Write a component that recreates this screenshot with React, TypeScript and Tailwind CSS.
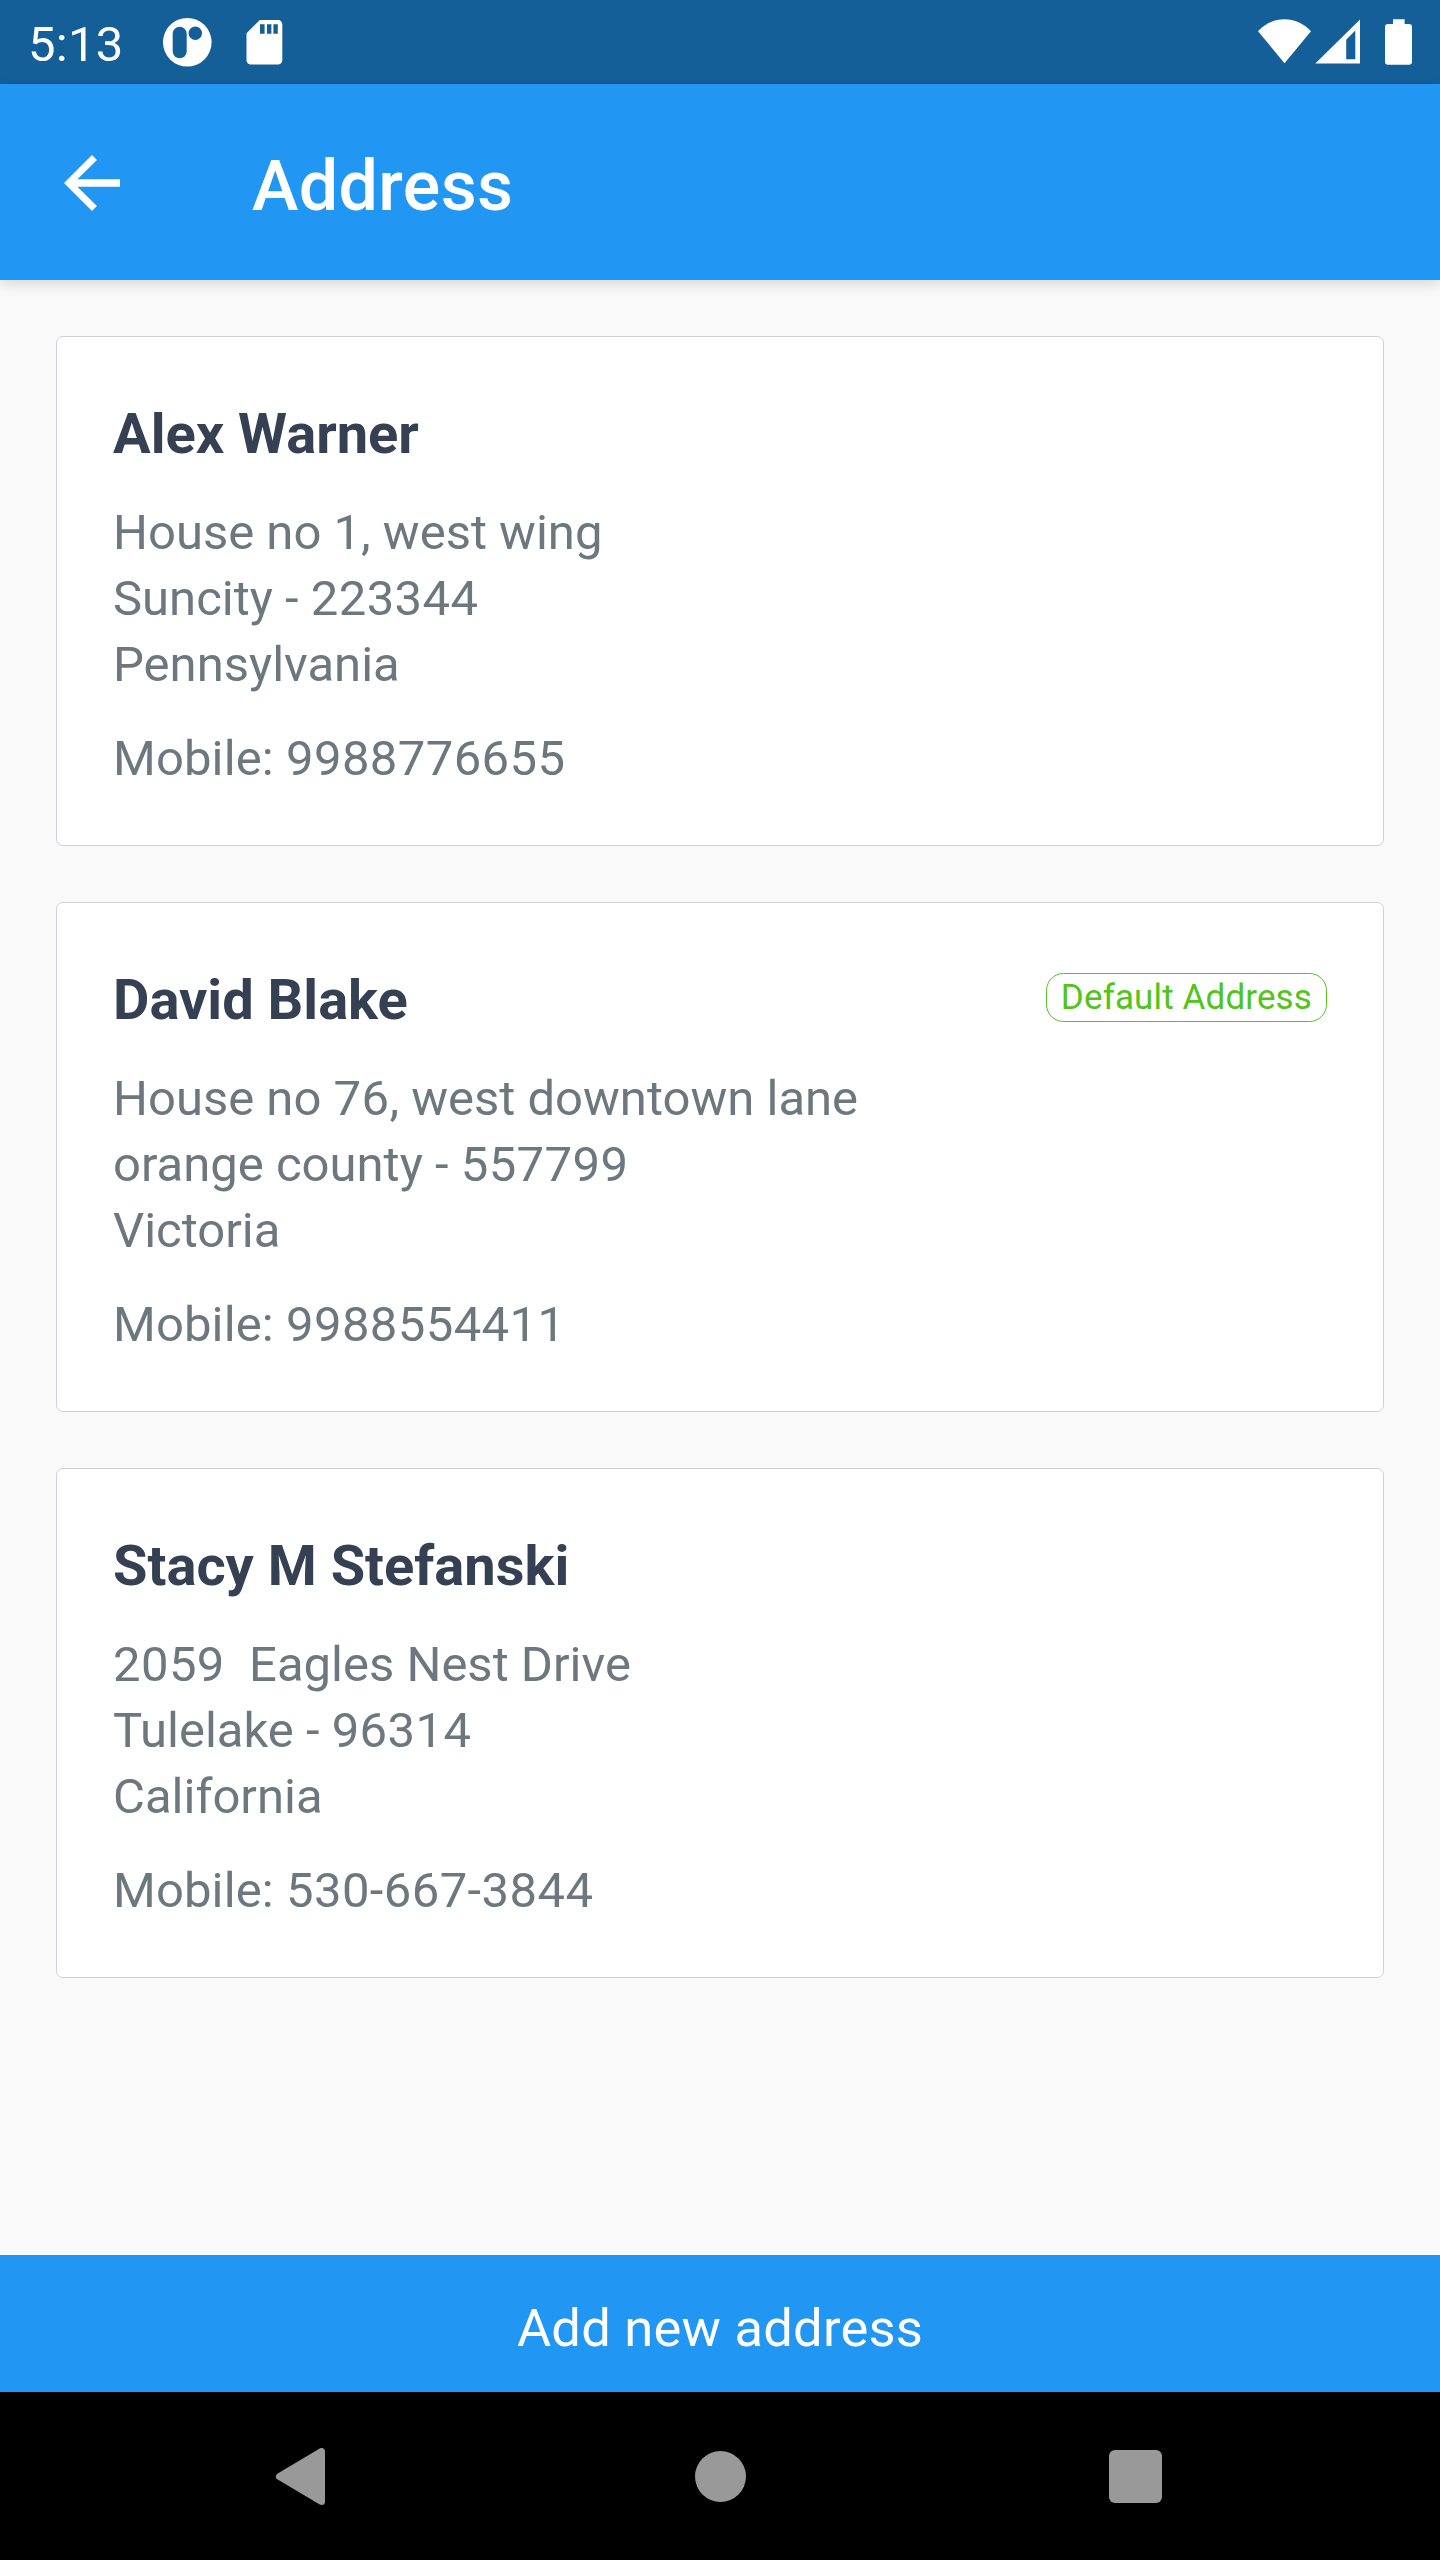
type Address = {
  name: string;
  lines: string[];
  mobile: string;
  isDefault?: boolean;
};

const addresses: Address[] = [
  {
    name: "Alex Warner",
    lines: ["House no 1, west wing", "Suncity - 223344", "Pennsylvania"],
    mobile: "9988776655",
  },
  {
    name: "David Blake",
    lines: ["House no 76, west downtown lane", "orange county - 557799", "Victoria"],
    mobile: "9988554411",
    isDefault: true,
  },
  {
    name: "Stacy M Stefanski",
    lines: ["2059  Eagles Nest Drive", "Tulelake - 96314", "California"],
    mobile: "530-667-3844",
  },
];

function StatusBar() {
  return (
    <div className="flex h-[84px] shrink-0 items-center justify-between bg-[#155f99] pl-7 pr-[27px] text-white">
      <div className="flex h-full items-center">
        <span className="mt-[5px] w-[134px] text-[49px] leading-[58px] tracking-[0.3px]">5:13</span>
        <svg className="h-[84px] w-[50px]" viewBox="162 0 50 84" aria-hidden="true">
          <circle cx="187.3" cy="42.3" r="24.3" fill="#fff" />
          <rect x="172.7" y="26.8" width="14" height="31.4" rx="7" fill="#155f99" />
          <circle cx="195.3" cy="33.3" r="6.7" fill="#155f99" />
        </svg>
        <svg className="ml-[34px] h-[84px] w-[38px]" viewBox="246 0 38 84" aria-hidden="true">
          <path
            d="M259.8 20H278a4.3 4.3 0 0 1 4.3 4.3v36a4.3 4.3 0 0 1-4.3 4.3h-27.2a4.3 4.3 0 0 1-4.3-4.3V33.2z"
            fill="#fff"
          />
          <path d="M260 24.3h4.6v9.4H260zM267 24.3h4.4v9.4H267zM273.4 24.3h4.4v9.4h-4.4z" fill="#155f99" />
        </svg>
      </div>
      <svg className="h-[84px] w-[156px]" viewBox="1257 0 156 84" fill="#fff" aria-hidden="true">
        <path d="M1284.5 63.2 1258 31.2C1265.5 23.3 1274.5 19.2 1284.5 19.2S1303.5 23.3 1311 31.2z" />
        <path fillRule="evenodd" d="M1315.3 63.6 1360 19.5V63.6zM1346.2 39.7V59.2H1355.3V30.5z" />
        <path d="M1393 19.3h11.6V24h4.4a3 3 0 0 1 3 3v34.7a3 3 0 0 1-3 3h-21a3 3 0 0 1-3-3V27a3 3 0 0 1 3-3h5z" />
      </svg>
    </div>
  );
}

function AppBar() {
  return (
    <header className="z-10 flex h-[196px] shrink-0 items-center bg-[#2196f3] pl-[50px] text-white shadow-[0_3px_14px_rgba(0,0,0,0.15)]">
      <button type="button" aria-label="Back" className="mt-[2px] h-[84px] w-[84px]">
        <svg viewBox="0 0 24 24" fill="currentColor" className="h-full w-full">
          <path d="M20 10.93H7.83l5.59-5.52L12 4l-8 8 8 8 1.41-1.41-5.58-5.52H20z" />
        </svg>
      </button>
      <h1 className="ml-[118px] mt-[8px] text-[70px] font-medium leading-[84px] tracking-[0.35px]">Address</h1>
    </header>
  );
}

/** Sets runs of digits slightly looser than the words around them. */
function SpacedDigits({ text }: { text: string }) {
  return (
    <>
      {text.split(/([\d-]{2,})/).map((part, i) =>
        i % 2 === 1 ? (
          <span key={i} className="tracking-[0.4px]">
            {part}
          </span>
        ) : (
          part
        ),
      )}
    </>
  );
}

function AddressCard({ address }: { address: Address }) {
  return (
    <article className="h-[510px] rounded-[7px] border border-[#ced0d8] bg-white px-14 pt-16 text-[49px] leading-[66px] text-[#6d787e]">
      <div className="flex items-start justify-between">
        <h2 className="text-[56px] font-bold leading-[66px] text-[#364053]">{address.name}</h2>
        {address.isDefault && (
          <span className="mt-[6px] rounded-[17.5px] border border-[#52c41a] px-[14px] pt-px text-[35px] leading-[46px] tracking-[0.13px] text-[#52c41a]">
            Default Address
          </span>
        )}
      </div>
      <div className="mt-[33px]">
        {address.lines.map((line) => (
          <p key={line} className="whitespace-pre">
            <SpacedDigits text={line} />
          </p>
        ))}
      </div>
      <p className="mt-7 tracking-[0.12px]">
        Mobile: <SpacedDigits text={address.mobile} />
      </p>
    </article>
  );
}

function NavigationBar() {
  return (
    <nav className="flex h-[168px] shrink-0 items-center justify-between bg-black pl-[276px] pr-[278px]">
      <svg className="h-[57px] w-[50px]" viewBox="0 0 50 57" aria-hidden="true">
        <path d="M3.5 28.5 45.5 3.5V53.5z" fill="#999" stroke="#999" strokeWidth="7" strokeLinejoin="round" />
      </svg>
      <span className="ml-[5px] h-[51px] w-[51px] rounded-full bg-[#999]" />
      <span className="h-[53px] w-[53px] rounded-[6px] bg-[#999]" />
    </nav>
  );
}

export default function App() {
  return (
    <div className="flex h-[2560px] w-[1440px] flex-col overflow-hidden bg-[#f9f9f9] font-[Roboto,sans-serif]">
      <StatusBar />
      <AppBar />
      <main className="flex flex-1 flex-col gap-14 p-14">
        {addresses.map((address) => (
          <AddressCard key={address.name} address={address} />
        ))}
      </main>
      <button
        type="button"
        className="h-[137px] shrink-0 bg-[#2196f3] pt-[8px] text-[52.5px] leading-[128px] tracking-[0.22px] text-white"
      >
        Add new address
      </button>
      <NavigationBar />
    </div>
  );
}
